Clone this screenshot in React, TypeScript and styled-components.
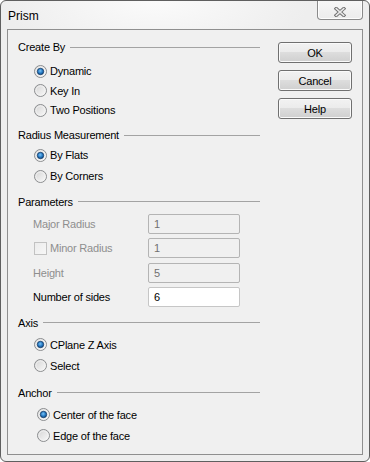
import React, { useId } from "react";
import styled, { createGlobalStyle } from "styled-components";

const GlobalStyle = createGlobalStyle`
    html, body {
        margin: 0;
        padding: 0;
        background: #ffffff;
    }
    body {
        font-family: 'Liberation Sans', Arial, sans-serif;
        font-size: 11px;
    }
`

const Window = styled.div`
    box-sizing: border-box;
    width: 370px;
    height: 462px;
    border: 1px solid #5f5f5f;
    border-radius: 6px;
    background: radial-gradient(ellipse 60% 80px at 42% 0%, #fbfbfb 0%, #eeeeee 70%), #ececec;
    display: flex;
    flex-direction: column;
    padding: 0 6px 6px 6px;
    overflow: hidden;
`

const TitleBar = styled.div`
    display: flex;
    flex-direction: row;
    justify-content: space-between;
    align-items: flex-start;
    height: 28px;
    flex-shrink: 0;
`

const Title = styled.span`
    align-self: center;
    font-size: 12px;
    color: #000;
    padding-left: 1px;
    padding-top: 1px;
`

const CloseButton = styled.div`
    box-sizing: border-box;
    margin-top: -1px;
    width: 46px;
    height: 20px;
    border: 1px solid #8a8a8a;
    border-top: none;
    border-radius: 0 0 4px 4px;
    background: linear-gradient(#f7f7f7, #ececec);
    box-shadow: inset 0 0 0 1px #fdfdfd;
    display: flex;
    align-items: flex-start;
    justify-content: center;
    padding-top: 7px;
`

const Client = styled.div`
    flex: 1;
    display: flex;
    flex-direction: row;
    border: 1px solid #8f8f8f;
    background: #f0f0f0;
    padding: 0 10px;
`

const MainColumn = styled.div`
    width: 242px;
    padding-top: 9px;
    display: flex;
    flex-direction: column;
`

const ButtonColumn = styled.div`
    margin-left: auto;
    padding-top: 12px;
    display: flex;
    flex-direction: column;
    gap: 7px;
`

const Button = styled.div`
    box-sizing: border-box;
    width: 74px;
    height: 21px;
    border: 1px solid #707070;
    border-radius: 3px;
    background: linear-gradient(#f2f2f2 0%, #ebebeb 49%, #dddddd 50%, #cfcfcf 100%);
    box-shadow: inset 0 0 0 1px #fafafa;
    display: flex;
    align-items: center;
    justify-content: center;
    color: #000;
    letter-spacing: -0.2px;
`

const Group = styled.div<{ $top: number }>`
    margin-top: ${p => p.$top}px;
    display: flex;
    flex-direction: column;
`

const Heading = styled.div`
    display: flex;
    align-items: center;
    height: 16px;
    gap: 5px;
    color: #000;
    letter-spacing: -0.2px;
`

const Rule = styled.div`
    flex: 1;
    height: 1px;
    background: #a3a3a3;
`

const List = styled.div<{ $top: number; $gap?: number }>`
    margin-top: ${p => p.$top}px;
    display: flex;
    flex-direction: column;
    gap: ${p => p.$gap ?? 0}px;
`

const RadioRow = styled.div<{ $pitch: number; $indent: number }>`
    display: flex;
    align-items: center;
    height: ${p => p.$pitch}px;
    padding-left: ${p => p.$indent}px;
    color: #000;
    letter-spacing: -0.2px;
`

const RadioLabel = styled.span`
    margin-left: 3px;
`

const ParamRow = styled.div`
    display: flex;
    align-items: center;
    height: 20px;
    padding-left: 15px;
`

const ParamLabel = styled.div<{ $disabled?: boolean }>`
    width: 115px;
    display: flex;
    align-items: center;
    color: ${p => (p.$disabled ? "#8e8e8e" : "#000")};
    letter-spacing: -0.2px;
`

const CheckBox = styled.span`
    box-sizing: border-box;
    width: 13px;
    height: 13px;
    margin-left: 1px;
    margin-right: 3px;
    border: 1px solid #c2c2c2;
    background: linear-gradient(135deg, #ececec, #f7f7f7);
`

const Field = styled.div<{ $disabled?: boolean }>`
    box-sizing: border-box;
    width: 92px;
    height: 20px;
    border: 1px solid ${p => (p.$disabled ? "#b4b4b4" : "#c6c6c6")};
    border-radius: 2px;
    background: ${p => (p.$disabled ? "#f0f0f0" : "#ffffff")};
    color: ${p => (p.$disabled ? "#707070" : "#000")};
    display: flex;
    align-items: center;
    padding: 0 5px;
`

const Radio = ({ checked }: { checked?: boolean }) => {
    const id = useId().replace(/:/g, "")
    return (
        <svg width="13" height="13" viewBox="0 0 13 13">
            <defs>
                <linearGradient id={`rg${id}`} x1="0" y1="0" x2="1" y2="1">
                    <stop offset="0" stopColor="#d3d3d3" />
                    <stop offset="1" stopColor="#fbfbfb" />
                </linearGradient>
                <radialGradient id={`rd${id}`} cx="0.45" cy="0.4" r="0.6">
                    <stop offset="0" stopColor="#7cc4f5" />
                    <stop offset="0.55" stopColor="#2a7fc9" />
                    <stop offset="1" stopColor="#0f4b86" />
                </radialGradient>
            </defs>
            <circle cx="6.5" cy="6.5" r="6" fill={`url(#rg${id})`} stroke="#8b8d8f" strokeWidth="1" />
            <circle cx="6.5" cy="6.5" r="4.6" fill="none" stroke="#f4f4f4" strokeWidth="0.8" />
            {checked && <circle cx="6.5" cy="6.5" r="3.2" fill={`url(#rd${id})`} stroke="#173e6a" strokeWidth="0.8" />}
        </svg>
    )
}

const CloseGlyph = () => (
    <svg width="12" height="10" viewBox="0 0 12 10">
        <path d="M2.2 1.6 L9.8 8.4 M9.8 1.6 L2.2 8.4" stroke="#6e6e6e" strokeWidth="3.4" strokeLinecap="square" />
        <path d="M2.2 1.6 L9.8 8.4 M9.8 1.6 L2.2 8.4" stroke="#e9e9e9" strokeWidth="1.5" strokeLinecap="square" />
    </svg>
)

type RadioGroupProps = {
    title: string
    top: number
    listTop: number
    pitch: number
    indent?: number
    options: string[]
    selected: number
}

const RadioGroup = ({ title, top, listTop, pitch, indent = 16, options, selected }: RadioGroupProps) => (
    <Group $top={top}>
        <Heading>
            <span>{title}</span>
            <Rule />
        </Heading>
        <List $top={listTop}>
            {options.map((o, i) => (
                <RadioRow key={o} $pitch={pitch} $indent={indent}>
                    <Radio checked={i === selected} />
                    <RadioLabel>{o}</RadioLabel>
                </RadioRow>
            ))}
        </List>
    </Group>
)

export default function App() {
    return (
        <>
            <GlobalStyle />
            <Window>
                <TitleBar>
                    <Title>Prism</Title>
                    <CloseButton>
                        <CloseGlyph />
                    </CloseButton>
                </TitleBar>
                <Client>
                    <MainColumn>
                        <RadioGroup
                            title="Create By"
                            top={0}
                            listTop={6.25}
                            pitch={19.5}
                            options={["Dynamic", "Key In", "Two Positions"]}
                            selected={0}
                        />
                        <RadioGroup
                            title="Radius Measurement"
                            top={7.25}
                            listTop={1.5}
                            pitch={21}
                            options={["By Flats", "By Corners"]}
                            selected={0}
                        />
                        <Group $top={7.2}>
                            <Heading>
                                <span>Parameters</span>
                                <Rule />
                            </Heading>
                            <List $top={4.3} $gap={4.33}>
                                <ParamRow>
                                    <ParamLabel $disabled>Major Radius</ParamLabel>
                                    <Field $disabled>1</Field>
                                </ParamRow>
                                <ParamRow>
                                    <ParamLabel $disabled>
                                        <CheckBox />
                                        Minor Radius
                                    </ParamLabel>
                                    <Field $disabled>1</Field>
                                </ParamRow>
                                <ParamRow>
                                    <ParamLabel $disabled>Height</ParamLabel>
                                    <Field $disabled>5</Field>
                                </ParamRow>
                                <ParamRow>
                                    <ParamLabel>Number of sides</ParamLabel>
                                    <Field>6</Field>
                                </ParamRow>
                            </List>
                        </Group>
                        <RadioGroup
                            title="Axis"
                            top={8}
                            listTop={3.5}
                            pitch={21}
                            options={["CPlane Z Axis", "Select"]}
                            selected={0}
                        />
                        <RadioGroup
                            title="Anchor"
                            top={8.5}
                            listTop={3.5}
                            pitch={21}
                            indent={19}
                            options={["Center of the face", "Edge of the face"]}
                            selected={0}
                        />
                    </MainColumn>
                    <ButtonColumn>
                        <Button>OK</Button>
                        <Button>Cancel</Button>
                        <Button>Help</Button>
                    </ButtonColumn>
                </Client>
            </Window>
        </>
    )
}
